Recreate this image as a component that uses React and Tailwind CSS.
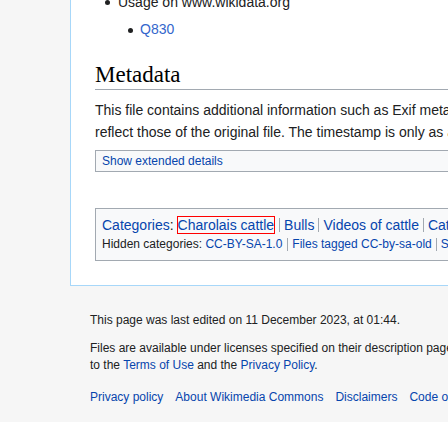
import React from 'react';

const cats = ['Charolais cattle', 'Bulls', 'Videos of cattle', 'Cattle in France'];
const hidden = ['CC-BY-SA-1.0', 'Files tagged CC-by-sa-old', 'Self-published work'];

export default function App() {
  return (
    <div className="h-[448px] w-[448px] overflow-hidden bg-white font-['Liberation_Sans',Arial,sans-serif] text-[#202122]">
      {/* Page body */}
      <div className="flex bg-[#f6f6f6]">
        <div className="w-[70px] shrink-0" />
        <div className="w-[1000px] shrink-0 border-b border-l border-[#a7d7f9] bg-white pb-[24px] pl-[24px]">
          {/* File usage list */}
          <ul className="mt-[-9px] ml-[23px] text-[14px] leading-[22px]">
            <li className="relative">
              <span className="absolute left-[-13px] top-[9px] h-[5px] w-[5px] rounded-full bg-[#202122]" />
              Usage on www.wikidata.org
              <ul className="ml-[22px] mt-[5px]">
                <li className="relative">
                  <span className="absolute left-[-12px] top-[10px] h-[5px] w-[5px] rounded-full bg-[#202122]" />
                  <a className="text-[#3366cc]">Q830</a>
                </li>
              </ul>
            </li>
          </ul>

          {/* Metadata */}
          <h2 className="mt-[20px] border-b border-[#a2a9b1] font-['Liberation_Serif',Georgia,serif] text-[23px] leading-[29px] text-black">
            Metadata
          </h2>
          <div className="mt-[9px] text-[14px] leading-[22px]">
            <p className="whitespace-nowrap">
              This file contains additional information such as Exif metadata which may have been added by the digital camera, scanner, or software program used to create or digitize it. If the file has been modified from its original state, some details such as the timestamp may not fully
            </p>
            <p className="whitespace-nowrap">
              reflect those of the original file. The timestamp is only as accurate as the clock in the camera, and it may be completely wrong.
            </p>
          </div>
          <div className="mt-[7px] w-[700px] border border-[#a2a9b1] bg-[#f8f9fa] pl-[6px] text-[12px] leading-[20px]">
            <a className="text-[#0645ad]">Show extended details</a>
          </div>

          {/* Categories */}
          <div className="mt-[36px] w-[900px] border border-[#a2a9b1] bg-[#f8f9fa] pb-[7px] pl-[6px] pt-[6px]">
            <div className="flex h-[20px] items-center whitespace-nowrap text-[14px]">
              <a className="text-[#0645ad]">Categories</a>
              <span>:</span>
              {cats.map((c, i) => (
                <span
                  key={c}
                  className={
                    i === 0
                      ? 'pl-[4px] pr-[5px] leading-[14px]'
                      : 'border-l border-[#a2a9b1] px-[4px] leading-[14px]'
                  }
                >
                  <a className={i === 0 ? 'text-[#0645ad] outline outline-1 outline-[#ff0000]' : 'text-[#0645ad]'}>
                    {c}
                  </a>
                </span>
              ))}
            </div>
            <div className="flex h-[18px] items-center whitespace-nowrap text-[12px]">
              <span>Hidden categories:&nbsp;</span>
              {hidden.map((c, i) => (
                <span
                  key={c}
                  className={
                    i === 0
                      ? 'pr-[5px] leading-[13px]'
                      : 'border-l border-[#a2a9b1] px-[4px] leading-[13px]'
                  }
                >
                  <a className="text-[#0645ad]">{c}</a>
                </span>
              ))}
            </div>
          </div>
        </div>
      </div>

      {/* Footer */}
      <footer className="bg-[#f6f6f6] pb-[16px] pl-[90px] pt-[26px] text-[12px] leading-[17px]">
        <p className="whitespace-nowrap">This page was last edited on 11 December 2023, at 01:44.</p>
        <div className="mt-[11px]">
          <p className="whitespace-nowrap">
            Files are available under licenses specified on their description page. All structured data from the file namespace is available under the Creative Commons CC0 License; all unstructured data is available under the Creative Commons Attribution-ShareAlike License; additional terms may apply. By using this site, you agree
          </p>
          <p className="whitespace-nowrap">
            to the <a className="text-[#0645ad]">Terms of Use</a> and the <a className="text-[#0645ad]">Privacy Policy</a>.
          </p>
        </div>
        <div className="mt-[15px] flex gap-[12px] whitespace-nowrap">
          <a className="text-[#0645ad]">Privacy policy</a>
          <a className="text-[#0645ad]">About Wikimedia Commons</a>
          <a className="text-[#0645ad]">Disclaimers</a>
          <a className="text-[#0645ad]">Code of Conduct</a>
          <a className="text-[#0645ad]">Developers</a>
        </div>
      </footer>
    </div>
  );
}
